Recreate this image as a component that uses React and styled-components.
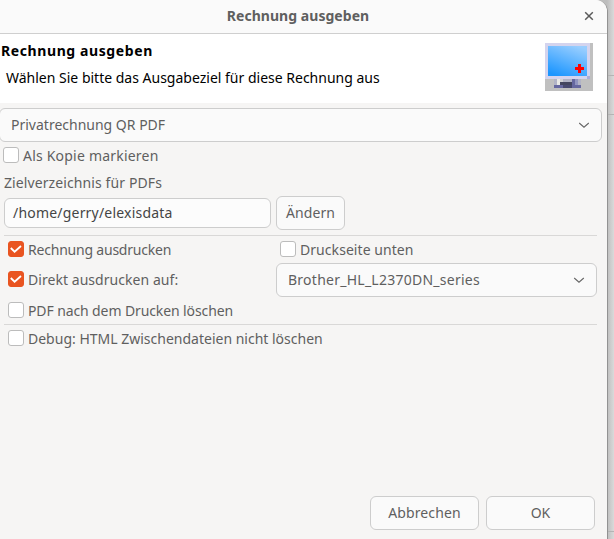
import React from 'react';
import styled, { createGlobalStyle } from 'styled-components';

const Global = createGlobalStyle`
  *, *::before, *::after { box-sizing: border-box; }
  body { margin: 0; overflow: hidden; background: #d4d4d4; }
  button, input { font: inherit; color: inherit; letter-spacing: inherit; }
`;

const Desktop = styled.div`
  width: 614px;
  height: 539px;
  display: flex;
  overflow: hidden;
  background: linear-gradient(#b4b4b4, #b4b4b4) 0 75px / 100% 1px no-repeat,
    linear-gradient(#b4b4b4, #b4b4b4) 0 114px / 100% 1px no-repeat,
    linear-gradient(#b4b4b4, #b4b4b4) 0 531px / 100% 1px no-repeat,
    linear-gradient(90deg, #bdbdbd 607px, #dadada 614px);
  font-family: 'Noto Sans', sans-serif;
  font-size: 14px;
  line-height: 20px;
  color: #5f5f5f;
`;

const Dialog = styled.main`
  width: 608px;
  height: 539px;
  display: flex;
  flex-direction: column;
  background: #f6f5f4;
  border-right: 1px solid #929292;
  border-top-right-radius: 12px;
  overflow: hidden;
`;

const TitleBar = styled.header`
  height: 34px;
  flex: none;
  display: grid;
  grid-template-columns: 1fr 14px;
  align-items: center;
  padding: 0 11px 2px 14px;
  background: #fafafa;
  border-bottom: 1px solid #cfcfcf;
  text-align: center;
  font-weight: 700;
`;

const Banner = styled.section`
  height: 69px;
  flex: none;
  display: flex;
  justify-content: space-between;
  padding: 9px 14px 0 1px;
  background: #fff;
  color: #000;
`;

const BannerText = styled.div`
  display: flex;
  flex-direction: column;
`;

const Heading = styled.h1`
  margin: -2px 0 7px;
  font-size: 14px;
  line-height: 20px;
`;

const Intro = styled.p`
  margin: 0 0 0 5px;
`;

const Text = styled.span`
  letter-spacing: ${(p) => p.$track || 0}px;
  white-space: nowrap;
`;

const Body = styled.section`
  flex: 1;
  display: flex;
  flex-direction: column;
  align-items: flex-start;
  padding-top: 5px;
`;

const Select = styled.button`
  width: ${(p) => p.$width}px;
  height: 34px;
  margin-left: ${(p) => p.$offset || 0}px;
  display: flex;
  align-items: center;
  justify-content: space-between;
  padding: 0 11px;
  border: 1px solid #cdcdcd;
  border-radius: 6px;
  background: #fafafa;
`;

const CheckLabel = styled.label`
  height: 16px;
  display: flex;
  align-items: flex-start;
  gap: 4px;
  line-height: 18px;
`;

const Box = styled.span`
  width: 16px;
  height: 16px;
  flex: none;
  display: grid;
  place-items: center;
  border: 1px solid ${(p) => (p.$on ? '#e95420' : '#bcbcbc')};
  border-radius: 3px;
  background: ${(p) => (p.$on ? '#e95420' : '#fff')};
`;

const CopyRow = styled.div`
  padding: 5px 0 0 3px;
`;

const FieldLabel = styled.div`
  padding: 10px 0 0 4px;
`;

const PathRow = styled.div`
  height: 34px;
  margin: 3px 0 5px 4px;
  display: flex;
  align-items: center;
  gap: 5px;
`;

const PathField = styled.div`
  width: 267px;
  height: 30px;
  display: flex;
  align-items: center;
  padding-left: 8px;
  border: 1px solid #cdcdcd;
  border-radius: 6px;
  background: #fcfcfc;
  color: #454545;
`;

const Button = styled.button`
  width: ${(p) => p.$width}px;
  height: 34px;
  padding: 0;
  border: 1px solid #cdcdcd;
  border-radius: 6px;
  background: #fafafa;
`;

const Rule = styled.hr`
  width: 593px;
  height: 1px;
  margin: 0 0 0 4px;
  border: 0;
  background: #d9d8d7;
`;

const PrintGrid = styled.div`
  display: grid;
  grid-template-columns: 268px 321px;
  grid-template-rows: 27px 34px 27px;
  padding-left: 8px;
`;

const Cell = styled.div`
  padding: ${(p) => p.$top || 5}px 0 0 ${(p) => p.$indent || 0}px;
`;

const DebugRow = styled.div`
  padding: 5px 0 0 8px;
`;

const Actions = styled.footer`
  height: 43px;
  display: flex;
  justify-content: flex-end;
  gap: 7px;
  padding-right: 12px;
`;

function Check({ on, children, track }) {
  return (
    <CheckLabel>
      <Box $on={on}>
        {on && (
          <svg width="14" height="14" viewBox="0 0 14 14" fill="none" stroke="#fff" strokeWidth="1.8">
            <path d="M1.8 6 5.6 9.7 12 4" />
          </svg>
        )}
      </Box>
      <Text $track={track}>{children}</Text>
    </CheckLabel>
  );
}

function Chevron() {
  return (
    <svg width="12" height="8" viewBox="0 0 12 8" fill="none" stroke="#666" strokeWidth="1.1">
      <path d="M1.2 2 6 6.2 10.8 2" />
    </svg>
  );
}

function Monitor() {
  return (
    <svg width="48" height="48" viewBox="0 0 16 16" shapeRendering="crispEdges">
      <defs>
        <linearGradient id="screen" x1="0.75" y1="0" x2="0.25" y2="1">
          <stop offset="0" stopColor="#99ceff" />
          <stop offset="1" stopColor="#1c96ff" />
        </linearGradient>
      </defs>
      <path fill="#c0c0c0" d="M0 0h16v16H0z" />
      <path fill="#d4d4ee" d="M0 0h15v12H0z" />
      <path fill="url(#screen)" d="M1 1h13v10H1z" />
      <path fill="#abaed8" d="M14 11h1v1h-1z" />
      <path fill="#f00" d="M11 7h1v1h1v1h-1v1h-1V9h-1V8h1z" />
      <path fill="#b2b4c6" d="M3 12h9v2H3z" />
      <path fill="#e9e9e6" d="M4 12h1v2H4z" />
      <path fill="#d2d2d5" d="M5 12h1v1H5z" />
      <path fill="#44465f" d="M5 13h4v1H5z" />
      <path fill="#6668a0" d="M9 12h1v2H9zM3 14h9v1H3z" />
      <path fill="#9094c0" d="M10 12h1v2h-1z" />
      <path fill="#484a70" d="M6 14h3v1H6z" />
    </svg>
  );
}

export default function App() {
  return (
    <>
      <Global />
      <Desktop>
        <Dialog>
          <TitleBar>
            <Text $track={0.04}>Rechnung ausgeben</Text>
            <svg width="14" height="14" viewBox="0 0 14 14" stroke="#5a5a5a" strokeWidth="1.5">
              <path d="m3.2 3.2 7.6 7.6M10.8 3.2l-7.6 7.6" />
            </svg>
          </TitleBar>
          <Banner>
            <BannerText>
              <Heading><Text $track={0.6}>Rechnung ausgeben</Text></Heading>
              <Intro><Text>Wählen Sie bitte das Ausgabeziel für diese Rechnung aus</Text></Intro>
            </BannerText>
            <Monitor />
          </Banner>
          <Body>
            <Select $width={603} $offset={-1}>
              <Text>Privatrechnung QR PDF</Text>
              <Chevron />
            </Select>
            <CopyRow><Check track={0.21}>Als Kopie markieren</Check></CopyRow>
            <FieldLabel><Text $track={0.1}>Zielverzeichnis für PDFs</Text></FieldLabel>
            <PathRow>
              <PathField><Text $track={0.2}>/home/gerry/elexisdata</Text></PathField>
              <Button $width={69}><Text $track={0.1}>Ändern</Text></Button>
            </PathRow>
            <Rule />
            <PrintGrid>
              <Cell><Check on track={-0.21}>Rechnung ausdrucken</Check></Cell>
              <Cell $indent={4}><Check track={0.06}>Druckseite unten</Check></Cell>
              <Cell $top={8}><Check on track={0.05}>Direkt ausdrucken auf:</Check></Cell>
              <Select $width={321}>
                <Text $track={0.25}>Brother_HL_L2370DN_series</Text>
                <Chevron />
              </Select>
              <Cell><Check track={-0.11}>PDF nach dem Drucken löschen</Check></Cell>
            </PrintGrid>
            <Rule />
            <DebugRow><Check>Debug: HTML Zwischendateien nicht löschen</Check></DebugRow>
          </Body>
          <Actions>
            <Button $width={109}><Text $track={0.1}>Abbrechen</Text></Button>
            <Button $width={109}><Text>OK</Text></Button>
          </Actions>
        </Dialog>
      </Desktop>
    </>
  );
}
